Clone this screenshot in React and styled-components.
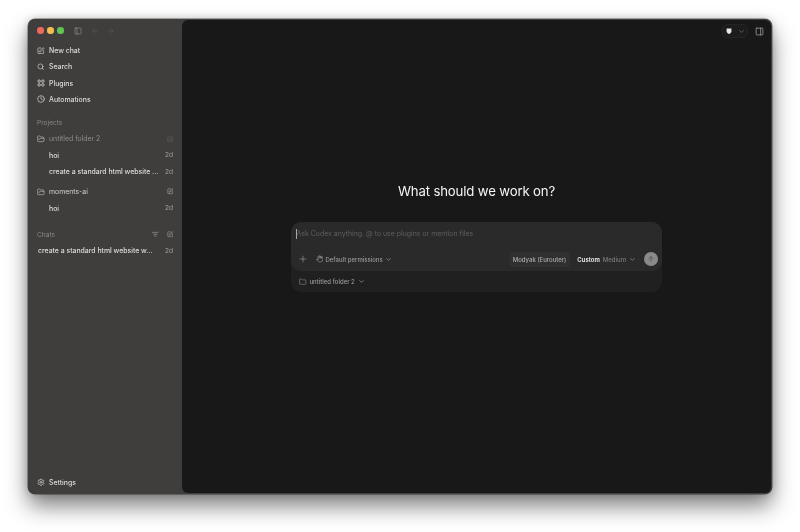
import React from "react";
import styled, { createGlobalStyle } from "styled-components";
import {
  ArrowLeft,
  ArrowRight,
  ArrowUp,
  ChevronDown,
  Clock,
  Folder,
  FolderOpen,
  Hand,
  ListFilter,
  PanelLeft,
  PanelRight,
  Plus,
  Search,
  Settings,
  SquarePen,
} from "lucide-react";

const GlobalStyle = createGlobalStyle`
  html, body {
    margin: 0;
    padding: 0;
    background: #ffffff;
  }
  body {
    font-family: Inter, "Liberation Sans", sans-serif;
    -webkit-font-smoothing: antialiased;
  }
`;

const Page = styled.div`
  width: 800px;
  height: 532px;
  box-sizing: border-box;
  padding: 19px 28px 38px;
  overflow: hidden;
`;

const Window = styled.div`
  display: flex;
  height: 475px;
  background: #3f3e3c;
  border-radius: 7px;
  will-change: transform;
  box-shadow: 0 0 0 0.5px rgba(0, 0, 0, 0.55), 0 12px 22px rgba(0, 0, 0, 0.5),
    0 0 10px rgba(0, 0, 0, 0.2);
`;

const Sidebar = styled.aside`
  width: 154px;
  flex: none;
  display: flex;
  flex-direction: column;
  padding: 0 9px;
  box-sizing: border-box;
`;

const TitleBar = styled.div`
  height: 23.3px;
  display: flex;
  align-items: center;
  color: #8f8e8b;
`;

const Dot = styled.span`
  width: 6.5px;
  height: 6.5px;
  border-radius: 50%;
  background: ${(p) => p.$color};
  margin-left: ${(p) => p.$gap}px;
`;

const TitleIcon = styled.span`
  display: flex;
  margin-left: ${(p) => p.$gap}px;
  color: ${(p) => p.$color};
`;

const NavList = styled.nav`
  display: flex;
  flex-direction: column;
`;

const IconSlot = styled.span`
  width: 8px;
  flex: none;
  display: flex;
  align-items: center;
  justify-content: center;
`;

const NavRow = styled.div`
  height: 16.33px;
  display: flex;
  align-items: center;
  gap: 4px;
  font-size: 6.9px;
  font-weight: 500;
  color: #dddcda;
`;

const SectionHead = styled.div`
  height: 15.5px;
  display: flex;
  align-items: center;
  justify-content: space-between;
  margin-top: ${(p) => p.$top}px;
  font-size: 6.6px;
  color: #8a8986;
`;

const HeadIcons = styled.div`
  display: flex;
  gap: 8px;
  color: #b5b4b1;
`;

const FolderRow = styled.div`
  height: 17px;
  margin-top: ${(p) => p.$top || 0}px;
  display: flex;
  align-items: center;
  gap: 4px;
  font-size: 6.9px;
  color: ${(p) => p.$color};
`;

const FolderName = styled.span`
  flex: 1;
`;

const ThreadRow = styled.div`
  height: 16.4px;
  display: flex;
  align-items: center;
  justify-content: space-between;
  padding-left: ${(p) => p.$indent}px;
  font-size: 6.9px;
  font-weight: 500;
  color: #dedddb;
  white-space: nowrap;
`;

const Age = styled.span`
  color: #a2a19e;
  font-weight: 400;
  font-size: 6.6px;
`;

const SettingsRow = styled(NavRow)`
  margin-top: auto;
  margin-bottom: 3.5px;
  height: 16px;
`;

const Main = styled.main`
  flex: 1;
  display: flex;
  flex-direction: column;
  align-items: center;
  background: #181818;
  margin: 1px 1px 1px 0;
  border-radius: 6px;
`;

const TopBar = styled.div`
  align-self: stretch;
  height: 22px;
  display: flex;
  justify-content: flex-end;
  align-items: center;
  gap: 6.5px;
  padding: 0 7.5px 0 0;
  color: #b0b0b0;
`;

const OpenPill = styled.div`
  width: 26px;
  height: 14px;
  box-sizing: border-box;
  padding-left: 1px;
  display: flex;
  align-items: center;
  justify-content: center;
  gap: 5.5px;
  border: 0.5px solid #242424;
  background: #1c1c1c;
  border-radius: 5px;
  color: #8c8c8c;
`;

const Heading = styled.h1`
  margin: 139px 0 0;
  height: 20px;
  line-height: 20px;
  font-size: 13.2px;
  font-weight: 400;
  letter-spacing: -0.15px;
  color: #f5f5f5;
`;

const ComposerWrap = styled.div`
  width: 371px;
  margin-top: 21px;
  background: #202020;
  border-radius: 10px;
`;

const Composer = styled.div`
  height: 49px;
  box-sizing: border-box;
  background: #2a2a2a;
  border-radius: 10px;
  padding: 6px 4px 0 5px;
  display: flex;
  flex-direction: column;
`;

const Prompt = styled.div`
  height: 11px;
  display: flex;
  align-items: center;
  font-size: 6.95px;
  color: #5f5f5f;
  white-space: nowrap;
`;

const Caret = styled.i`
  width: 1px;
  height: 10px;
  margin-right: -0.5px;
  background: #a8a8a8;
`;

const ComposerBar = styled.div`
  display: flex;
  align-items: center;
  margin-top: 12px;
  height: 16px;
  padding-left: 2px;
  font-size: 6px;
  color: #9a9a9a;
`;

const Control = styled.div`
  display: flex;
  align-items: center;
  gap: ${(p) => p.$gap || 2}px;
  margin-left: ${(p) => p.$left || 0}px;
  font-weight: 500;
  white-space: nowrap;
`;

const ModelChip = styled.div`
  margin-left: auto;
  height: 15px;
  padding: 0 4px;
  display: flex;
  align-items: center;
  border-radius: 4px;
  background: #303030;
  color: #ababab;
  font-weight: 500;
  white-space: nowrap;
`;

const Strong = styled.b`
  color: #f0f0f0;
  font-weight: 600;
`;

const Muted = styled.span`
  color: #7b7b7b;
  font-weight: 500;
`;

const SendButton = styled.button`
  width: 14px;
  height: 14px;
  margin-left: 8px;
  padding: 0;
  border: 0;
  border-radius: 50%;
  background: #8a8a8a;
  color: #3a3a3a;
  display: flex;
  align-items: center;
  justify-content: center;
`;

const ComposerFoot = styled.div`
  height: 21px;
  display: flex;
  align-items: center;
  gap: 3px;
  padding-left: 8px;
  font-size: 6px;
  font-weight: 500;
  color: #9a9a9a;
`;

function CubeMark() {
  return (
    <svg width="6" height="6" viewBox="0 0 10 10">
      <path d="M1 1 H9 V6.5 L6.5 9.5 H3.5 L1 6.5 Z" fill="#e8e8e8" />
    </svg>
  );
}

function PluginsIcon() {
  return (
    <svg
      width="8"
      height="8"
      viewBox="0 0 16 16"
      fill="none"
      stroke="currentColor"
      strokeWidth="1.7"
    >
      <rect x="2" y="2" width="4.6" height="4.6" rx="1.8" />
      <rect x="9.4" y="2" width="4.6" height="4.6" rx="1.8" />
      <rect x="2" y="9.4" width="4.6" height="4.6" rx="1.8" />
      <rect x="9.4" y="9.4" width="4.6" height="4.6" rx="1.8" />
    </svg>
  );
}

export default function App() {
  return (
    <>
      <GlobalStyle />
      <Page>
        <Window>
          <Sidebar>
            <TitleBar>
              <Dot $color="#ed6a5e" $gap={0} />
              <Dot $color="#f4bf4f" $gap={3.5} />
              <Dot $color="#61c554" $gap={3.5} />
              <TitleIcon $gap={10} $color="#a09f9c">
                <PanelLeft size={8} strokeWidth={1.6} />
              </TitleIcon>
              <TitleIcon $gap={9} $color="#5d5c5a">
                <ArrowLeft size={8} strokeWidth={1.6} />
              </TitleIcon>
              <TitleIcon $gap={8} $color="#5d5c5a">
                <ArrowRight size={8} strokeWidth={1.6} />
              </TitleIcon>
            </TitleBar>

            <NavList>
              <NavRow>
                <IconSlot><SquarePen size={7.5} strokeWidth={2} /></IconSlot>
                New chat
              </NavRow>
              <NavRow>
                <IconSlot><Search size={7.5} strokeWidth={2} /></IconSlot>
                Search
              </NavRow>
              <NavRow>
                <IconSlot><PluginsIcon /></IconSlot>
                Plugins
              </NavRow>
              <NavRow>
                <IconSlot><Clock size={8} strokeWidth={2} /></IconSlot>
                Automations
              </NavRow>
            </NavList>

            <SectionHead $top={7.2}>Projects</SectionHead>
            <FolderRow $color="#8e8d8a">
              <IconSlot><FolderOpen size={8} strokeWidth={1.8} color="#c4c3c0" /></IconSlot>
              <FolderName>untitled folder 2</FolderName>
              <SquarePen size={6.5} strokeWidth={1.8} color="#6c6b69" />
            </FolderRow>
            <ThreadRow $indent={12}>
              hoi
              <Age>2d</Age>
            </ThreadRow>
            <ThreadRow $indent={12}>
              create a standard html website ...
              <Age>2d</Age>
            </ThreadRow>
            <FolderRow $top={3} $color="#cfcecb">
              <IconSlot><FolderOpen size={8} strokeWidth={1.8} color="#c4c3c0" /></IconSlot>
              <FolderName>moments-ai</FolderName>
              <SquarePen size={6.5} strokeWidth={1.8} color="#c4c3c0" />
            </FolderRow>
            <ThreadRow $indent={12}>
              hoi
              <Age>2d</Age>
            </ThreadRow>

            <SectionHead $top={10.5}>
              Chats
              <HeadIcons>
                <ListFilter size={6.5} strokeWidth={2} />
                <SquarePen size={6.5} strokeWidth={1.8} />
              </HeadIcons>
            </SectionHead>
            <ThreadRow $indent={1}>
              create a standard html website w...
              <Age>2d</Age>
            </ThreadRow>

            <SettingsRow>
              <IconSlot><Settings size={8.5} strokeWidth={1.8} /></IconSlot>
              Settings
            </SettingsRow>
          </Sidebar>

          <Main>
            <TopBar>
              <OpenPill>
                <CubeMark />
                <ChevronDown size={7} strokeWidth={2} />
              </OpenPill>
              <PanelRight size={9} strokeWidth={1.8} />
            </TopBar>

            <Heading>What should we work on?</Heading>

            <ComposerWrap>
              <Composer>
                <Prompt>
                  <Caret />
                  Ask Codex anything. @ to use plugins or mention files
                </Prompt>
                <ComposerBar>
                  <Plus size={10} strokeWidth={1.5} />
                  <Control $left={7.5} $gap={2.5}>
                    <Hand size={7.5} strokeWidth={2} />
                    Default permissions
                    <ChevronDown size={7} strokeWidth={2.4} />
                  </Control>
                  <ModelChip>Modyak (Eurouter)</ModelChip>
                  <Control $left={7} $gap={3}>
                    <Strong>Custom</Strong>
                    <Muted>Medium</Muted>
                    <ChevronDown size={7} strokeWidth={2.4} />
                  </Control>
                  <SendButton>
                    <ArrowUp size={8} strokeWidth={1.6} />
                  </SendButton>
                </ComposerBar>
              </Composer>
              <ComposerFoot>
                <Folder size={7.5} strokeWidth={1.8} />
                untitled folder 2
                <ChevronDown size={7} strokeWidth={2.4} />
              </ComposerFoot>
            </ComposerWrap>
          </Main>
        </Window>
      </Page>
    </>
  );
}
